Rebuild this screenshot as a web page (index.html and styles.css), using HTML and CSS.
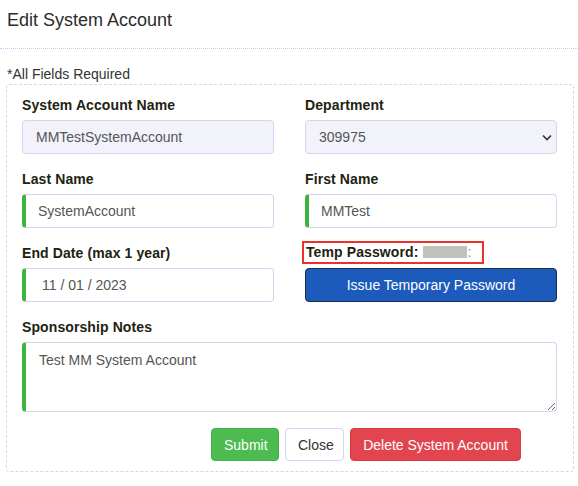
FILE: index.html
```html
<!DOCTYPE html>
<html lang="en">
<head>
<meta charset="utf-8">
<title>Edit System Account</title>
<link rel="stylesheet" href="styles.css">
</head>
<body>
<div class="modal">
  <div class="modal-header">
    <h1 class="modal-title">Edit System Account</h1>
  </div>
  <div class="modal-body">
    <p class="required-note">*All Fields Required</p>
    <form class="card">
      <div class="grid">
        <div class="field">
          <label class="label">System Account Name</label>
          <input class="control readonly" type="text" value="MMTestSystemAccount" readonly>
        </div>
        <div class="field">
          <label class="label">Department</label>
          <div class="select-wrap">
            <select class="control readonly select">
              <option>309975</option>
            </select>
            <svg class="chevron" width="10" height="7" viewBox="0 0 10 7"><polyline points="1,1.5 5,5.5 9,1.5" fill="none" stroke="#333" stroke-width="1.6"/></svg>
          </div>
        </div>
        <div class="field">
          <label class="label">Last Name</label>
          <input class="control valid" type="text" value="SystemAccount">
        </div>
        <div class="field">
          <label class="label">First Name</label>
          <input class="control valid" type="text" value="MMTest">
        </div>
        <div class="field">
          <label class="label">End Date (max 1 year)</label>
          <input class="control valid date" type="text" value="11 / 01 / 2023">
        </div>
        <div class="field">
          <span class="label temp-label">Temp Password: <span class="redacted"></span><span class="redacted-end">:</span></span>
          <button type="button" class="btn btn-primary">Issue Temporary Password</button>
        </div>
        <div class="field full">
          <label class="label">Sponsorship Notes</label>
          <textarea class="control valid notes">Test MM System Account</textarea>
        </div>
      </div>
      <div class="actions">
        <button type="button" class="btn btn-success">Submit</button>
        <button type="button" class="btn btn-default">Close</button>
        <button type="button" class="btn btn-danger">Delete System Account</button>
      </div>
    </form>
  </div>
</div>
</body>
</html>
```
FILE: styles.css
```css
* { box-sizing: border-box; }

html, body {
  margin: 0;
  padding: 0;
  background: #ffffff;
  font-family: "Liberation Sans", Arial, sans-serif;
  font-size: 14px;
  color: #333333;
}

.modal { width: 578px; }

.modal-header {
  padding: 10px 7px 18px;
  border-bottom: 1px dotted #c9c9ef;
}

.modal-title {
  margin: 0;
  font-size: 18px;
  line-height: 20px;
  font-weight: normal;
  color: #2b2b2b;
}

.modal-body { padding: 15px 4px 0 6px; }

.required-note {
  margin: 0 0 0 1px;
  line-height: 20px;
  color: #333333;
}

.card {
  margin: 0;
  border: 1px dashed #d6d6f4;
  border-radius: 3px;
  padding: 10px 15px 10px;
}

.grid {
  display: grid;
  grid-template-columns: 252px 252px;
  column-gap: 31px;
}

.field {
  display: flex;
  flex-direction: column;
  align-items: flex-start;
  margin-bottom: 15px;
}

.field.full {
  grid-column: 1 / span 2;
  margin-bottom: 16px;
}

.label {
  display: block;
  font-weight: bold;
  line-height: 20px;
  margin-bottom: 5px;
  color: #222211;
  letter-spacing: 0.1px;
}

.control {
  width: 100%;
  height: 34px;
  margin: 0;
  padding: 0 12px;
  border: 1px solid #d4d4ee;
  border-radius: 4px;
  background: #ffffff;
  font-family: "Liberation Sans", Arial, sans-serif;
  font-size: 14px;
  color: #555555;
  outline: none;
}

.control.readonly {
  background: #f2f2fb;
  padding-left: 13px;
}

.control.valid { border-left: 4px solid #3db43f; }

.control.date { padding-left: 16px; }

.select-wrap {
  position: relative;
  width: 100%;
}

.select {
  appearance: none;
  -webkit-appearance: none;
  display: block;
}

.chevron {
  position: absolute;
  right: 5px;
  top: 14px;
}

.temp-label {
  display: block;
  width: 182px;
  margin: -2px 0 4px -3px;
  padding: 0 0 0 2px;
  border: 2px solid #ee2f2a;
  line-height: 19px;
}

.redacted {
  display: inline-block;
  width: 44px;
  height: 12px;
  margin-left: 1px;
  vertical-align: -1px;
  background: #c2c2bd;
  filter: blur(0.6px);
}

.redacted-end {
  color: #8a8a86;
  font-weight: normal;
}

.notes {
  height: 70px;
  padding-top: 8px;
  padding-left: 13px;
  line-height: 18px;
  resize: vertical;
}

.btn {
  height: 33px;
  margin: 0;
  padding: 0 12px;
  border: 1px solid transparent;
  border-radius: 4px;
  font-family: "Liberation Sans", Arial, sans-serif;
  font-size: 14px;
  line-height: 20px;
  cursor: pointer;
}

.btn-primary {
  width: 100%;
  height: 34px;
  background: #1c5bbb;
  border-color: #1d2c48;
  color: #ffffff;
}

.actions {
  display: flex;
  justify-content: flex-end;
  gap: 6px;
  padding-right: 37px;
}

.btn-success {
  width: 68px;
  background: #4cbb50;
  border-color: #45b04a;
  color: #ffffff;
}

.btn-default {
  width: 59px;
  background: #ffffff;
  border-color: #d4d4ee;
  color: #333333;
}

.btn-danger {
  width: 171px;
  background: #e2454f;
  border-color: #dc3a3f;
  color: #ffffff;
}
```
